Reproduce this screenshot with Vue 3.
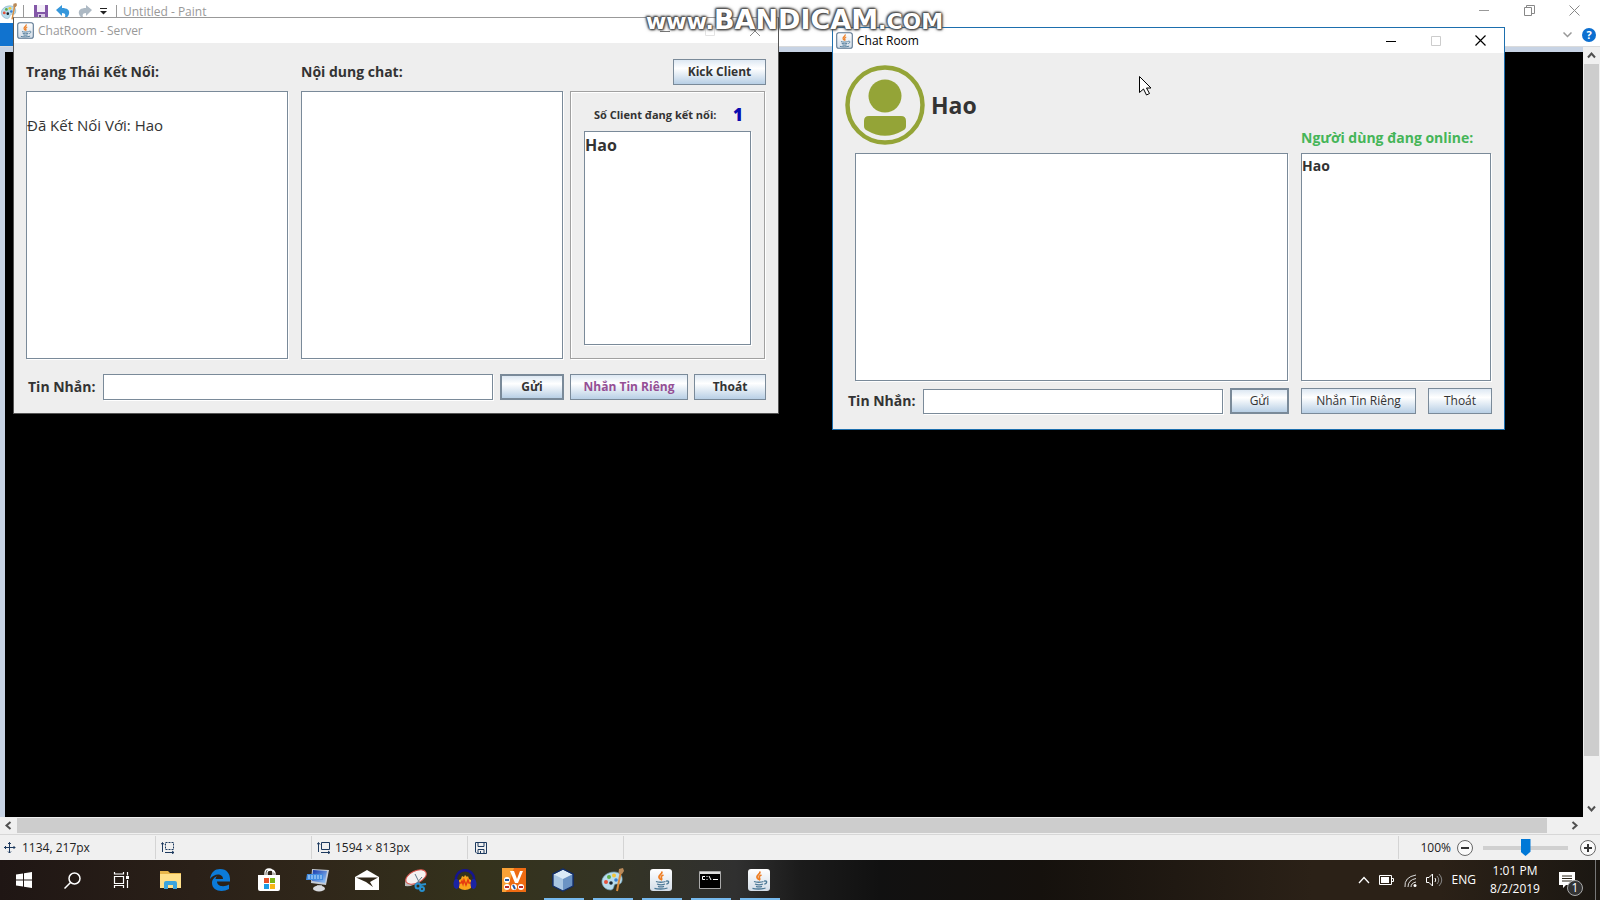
<script setup>
import { ref } from 'vue'

const statusLog = ref('\nĐã Kết Nối Với: Hao')
const chatLog = ref('')
const clientLog = ref('')
const serverMessage = ref('')
const clientMessage = ref('')
const zoom = ref(50)
const users = ['Hao']
const pinned = ['start', 'search', 'tasks', 'folder', 'edge', 'store', 'remote', 'mail', 'snip', 'audio', 'unikey', 'cube', 'palette', 'java', 'cmd', 'java']
const labels = ['Start', 'Search', 'Task View', 'File Explorer', 'Edge', 'Store', 'Remote', 'Mail', 'Snipping Tool', 'Audacity', 'UniKey', 'VirtualBox', 'Paint', 'ChatRoom - Server', 'Command Prompt', 'Chat Room']
</script>

<template>
  <svg class="defs" aria-hidden="true">
    <defs>
      <linearGradient id="tile" x1="0" y1="0" x2="0" y2="1">
        <stop offset="0" stop-color="#fff" /><stop offset="1" stop-color="#d3dde8" />
      </linearGradient>
      <linearGradient id="screen" x1="0" y1="0" x2="1" y2="1">
        <stop offset="0" stop-color="#1236a8" /><stop offset="1" stop-color="#9ed0ff" />
      </linearGradient>
      <symbol id="java" viewBox="0 0 24 24">
        <rect x="1" y="1" width="22" height="22" rx="3" fill="url(#tile)" />
        <path d="M12.500 3.500c2 2-3.500 3.500-2.500 6 .3 1 1.500 1.500 1.800 2.500M14.500 7c-2 .8-2.800 1.700-2 3 .5.900.3 1.700-.4 2.200" fill="none" stroke="#ee7d22" stroke-width="1.700" />
        <path d="M7 13.500c2 1 7.500 1 9.500 0M8 16c2 .8 6 .8 8 0M9 18.300c1.500.6 4.500.6 6 0M5.500 20.300c3 1 9.500 1 13-.3M17 13.200c4-1 3 2.500.3 3" fill="none" stroke="#4c7896" stroke-width="1.300" />
      </symbol>
      <symbol id="palette" viewBox="0 0 24 24">
        <path d="M2 15C1 9 7 4 14 4c6 0 9 4 8 9-1 4-4 3-6 3-3 0-1 5-5 6-5 0-8-3-9-7z" fill="#b9dcec" stroke="#6f9fb8" stroke-width=".7" />
        <circle cx="6" cy="14" r="2" fill="#e3523d" /><circle cx="9" cy="9" r="2" fill="#5cb04b" /><circle cx="14" cy="7.500" r="2" fill="#f2c53a" /><circle cx="11" cy="15" r="1.800" fill="#17232d" /><circle cx="16" cy="12" r="1.800" fill="#397fd2" />
        <path d="M21 3l-4 20" stroke="#d98b3d" stroke-width="2" /><path d="M18.500 5l.5-4 4-1 1 3-2 3z" fill="#b98a5a" />
      </symbol>
    </defs>
  </svg>

  <div class="desktop">
    <main class="paint">
      <header class="titlebar">
        <svg class="app" width="17" height="17"><use href="#palette" /></svg>
        <i class="sep"></i>
        <button class="ghost" aria-label="Save"><svg width="14" height="14"><path d="M0 0h14v14H0z" fill="#8458a8" /><path d="M3 0h8v7H3z" fill="#f3eef8" /><path d="M4 9h7v5H4z" fill="#d9cbe6" /><path d="M5 10h2v4H5z" fill="#63428a" /></svg></button>
        <button class="ghost" aria-label="Undo"><svg width="14" height="14"><path d="M0 5l6-5v3c5 0 8 2 7 6-1 3-3 4-5 5 2-3 2-6-2-6v3z" fill="#3697db" /></svg></button>
        <button class="ghost" aria-label="Redo"><svg width="14" height="14"><path d="M14 5L8 0v3C3 3 0 5 1 9c1 3 3 4 5 5-2-3-2-6 2-6v3z" fill="#adb9c4" /></svg></button>
        <button class="ghost drop" aria-label="Customize toolbar"><svg width="7" height="7"><path d="M0 .500h7" stroke="#222" /><path d="M0 3h7L3.500 6.500z" fill="#222" /></svg></button>
        <i class="sep"></i>
        <h1>Untitled - Paint</h1>
        <div class="controls">
          <button class="ghost" aria-label="Minimize"><svg width="11" height="11"><path d="M0 5.500h10" stroke="#999" /></svg></button>
          <button class="ghost" aria-label="Restore"><svg width="11" height="11" fill="none" stroke="#888"><path d="M.500 2.500h7v8h-7zM2.500 2.500v-2h8v8h-3" /></svg></button>
          <button class="ghost" aria-label="Close"><svg width="11" height="11"><path d="M.500.500l10 10M10.500.500l-10 10" stroke="#888" /></svg></button>
        </div>
      </header>
      <div class="ribbon">
        <button class="file" aria-label="File"></button>
        <button class="ghost" aria-label="Expand ribbon"><svg width="9" height="6"><path d="M.500.500l4 4 4-4" fill="none" stroke="#999" stroke-width="1.500" /></svg></button>
        <button class="ghost help" aria-label="Help">?</button>
      </div>
      <section class="work">
        <div class="canvas"></div>
        <div class="vscroll">
          <svg width="17" height="17"><path d="M5 10.500l3.500-4 3.500 4" fill="none" stroke="#505050" stroke-width="2" /></svg>
          <div class="vtrack"><i></i></div>
          <svg width="17" height="17"><path d="M5 6.500l3.500 4 3.500-4" fill="none" stroke="#505050" stroke-width="2" /></svg>
        </div>
      </section>
      <div class="hscroll">
        <svg width="17" height="17"><path d="M10.500 5l-4 3.500 4 3.500" fill="none" stroke="#505050" stroke-width="2" /></svg>
        <div class="htrack"><i></i></div>
        <svg width="17" height="17"><path d="M6.500 5l4 3.500-4 3.500" fill="none" stroke="#505050" stroke-width="2" /></svg>
      </div>
      <footer class="status">
        <div class="cell"><svg width="12" height="12" fill="none" stroke="#1d3a5f"><path d="M5.500 0v11M0 5.500h11M4 2L5.500.500 7 2M4 9.500L5.500 11 7 9.500M2 4L.500 5.500 2 7M9.500 4L11 5.500 9.500 7" /></svg><span>1134, 217px</span></div>
        <div class="cell pic"><svg width="14" height="12" fill="none" stroke="#1d3a5f"><path d="M1.500 10V1M0 2.500L1.500.500 3 2.500M4 10.500h9M11 9l2 1.500-2 1.500" /><path d="M4.500.500h8v7h-8z" stroke-dasharray="2 1" /></svg></div>
        <div class="cell pic"><svg width="14" height="12" fill="none" stroke="#1d3a5f"><path d="M1.500 10V1M0 2.500L1.500.500 3 2.500M4 10.500h9M11 9l2 1.500-2 1.500M4.500.500h8v7h-8z" /></svg><span>1594 × 813px</span></div>
        <div class="cell disk"><svg width="12" height="12" fill="none" stroke="#1d3a5f"><path d="M.500.500h11v11H2L.500 10zM3 .500v4h6v-4M3 11.500v-4h6v4M5.500 9v2" /></svg></div>
        <div class="cell last">
          <label for="zoom">100%</label>
          <button class="round" aria-label="Zoom out"><svg width="16" height="16"><circle cx="8" cy="8" r="7.500" fill="#fafafa" stroke="#666" /><path d="M4 8h8" stroke="#333" stroke-width="2" /></svg></button>
          <input id="zoom" v-model="zoom" type="range" min="0" max="100" />
          <button class="round" aria-label="Zoom in"><svg width="16" height="16"><circle cx="8" cy="8" r="7.500" fill="#fafafa" stroke="#666" /><path d="M4 8h8M8 4v8" stroke="#333" stroke-width="2" /></svg></button>
        </div>
      </footer>
    </main>

    <section class="window server">
      <header class="bar">
        <svg width="17" height="17"><use href="#java" /></svg>
        <h2>ChatRoom - Server</h2>
        <div class="controls">
          <button class="ghost" aria-label="Minimize server"><svg width="10" height="10"><path d="M0 5.500h10" stroke="#777" /></svg></button>
          <button class="ghost" disabled aria-label="Maximize server"><svg width="10" height="10"><path d="M.500.500h9v9h-9z" fill="none" stroke="#e4e4e4" /></svg></button>
          <button class="ghost" aria-label="Close server"><svg width="10" height="10"><path d="M0 0l10 10M10 0L0 10" stroke="#888" /></svg></button>
        </div>
      </header>
      <div class="body">
        <div class="heads">
          <label for="log">Trạng Thái Kết Nối:</label>
          <label for="chat">Nội dung chat:</label>
          <button class="metal">Kick Client</button>
        </div>
        <div class="panes">
          <textarea id="log" v-model="statusLog" readonly></textarea>
          <textarea id="chat" v-model="chatLog" readonly></textarea>
          <div class="clients">
            <p><span>Số Client đang kết nối:</span><strong>1</strong></p>
            <ul class="list"><li v-for="u in users" :key="u">{{ u }}</li></ul>
          </div>
        </div>
        <form class="send" @submit.prevent>
          <label for="smsg">Tin Nhắn:</label>
          <input id="smsg" v-model="serverMessage" type="text" />
          <button class="metal default">Gửi</button>
          <button class="metal private" type="button">Nhắn Tin Riêng</button>
          <button class="metal quit" type="button">Thoát</button>
        </form>
      </div>
    </section>

    <section class="window client">
      <header class="bar">
        <svg width="17" height="17"><use href="#java" /></svg>
        <h2>Chat Room</h2>
        <div class="controls">
          <button class="ghost" aria-label="Minimize chat"><svg width="10" height="10"><path d="M0 5.500h10" stroke="#000" /></svg></button>
          <button class="ghost" disabled aria-label="Maximize chat"><svg width="10" height="10"><path d="M.500.500h9v9h-9z" fill="none" stroke="#ccc" /></svg></button>
          <button class="ghost" aria-label="Close chat"><svg width="11" height="11"><path d="M.500.500l10 10M10.500.500l-10 10" stroke="#000" stroke-width="1.200" /></svg></button>
        </div>
      </header>
      <div class="body">
        <div class="profile">
          <svg width="80" height="80" viewBox="0 0 80 80" fill="#94a437"><circle cx="40" cy="40" r="37.500" fill="none" stroke="#94a437" stroke-width="4.500" /><circle cx="40" cy="31" r="16.500" /><path d="M24 51h32q5 0 5 5v5q0 3-3 4.500Q40 76 22 65.500 19 64 19 61v-5q0-5 5-5z" /></svg>
          <strong>Hao</strong>
          <span id="online">Người dùng đang online:</span>
        </div>
        <div class="panes">
          <textarea v-model="clientLog" readonly aria-label="Chat"></textarea>
          <ul class="list" aria-labelledby="online"><li v-for="u in users" :key="u">{{ u }}</li></ul>
        </div>
        <form class="send" @submit.prevent>
          <label for="cmsg">Tin Nhắn:</label>
          <input id="cmsg" v-model="clientMessage" type="text" />
          <button class="metal default">Gửi</button>
          <button class="metal private" type="button">Nhắn Tin Riêng</button>
          <button class="metal quit" type="button">Thoát</button>
        </form>
      </div>
    </section>

    <div class="watermark"><span>www.</span><b>BANDICAM</b><span>.COM</span></div>
    <svg class="cursor" width="13" height="20"><path d="M.500.500v16l4-3.500 3 6 3-1.500-3-5.500h4.500z" fill="#fff" stroke="#000" /></svg>

    <nav class="taskbar">
      <button v-for="(p, i) in pinned" :key="i" class="task" :class="{ open: i > 10 }" :aria-label="labels[i]">
        <svg v-if="p === 'start'" width="16" height="16" fill="#fff"><path d="M0 2.500l7-1v6H0zM8 1.300L16 0v7.500H8zM0 8.500h7v6l-7-1zM8 8.500h8V16l-8-1.300z" /></svg>
        <svg v-else-if="p === 'search'" width="17" height="17" fill="none" stroke="#fff" stroke-width="1.500"><circle cx="10.500" cy="6.500" r="5.500" /><path d="M6.500 10.500L.500 16.500" /></svg>
        <svg v-else-if="p === 'tasks'" width="17" height="16" fill="none" stroke="#fff" stroke-width="1.200"><path d="M1.500 4.500h9v7h-9zM1.500 0v2h9V0M1.500 16v-2.500h9V16M14.500 0v3.500M14.500 8v8" /><path d="M13 4h3v3h-3z" fill="#fff" stroke="none" /></svg>
        <svg v-else-if="p === 'folder'" width="24" height="20"><path d="M1 1h8l2 2h11v15H1z" fill="#e8b64b" /><path d="M1 4h21v14H1z" fill="#ffe08a" /><path d="M5 19v-6q0-2 2-2h9q2 0 2 2v6h-4v-4H9v4z" fill="#3ba4dd" /></svg>
        <svg v-else-if="p === 'edge'" width="22" height="22"><path d="M1 10C2 3 6 0 11 0c7 0 10 5 10 10v2.500H8c0 5 7 6 12 3V20c-7 4-17 2-17-6 0-4 3-6 5-7-1 1-1.500 2-1.500 3H14C14 4 5 4 1 10z" fill="#0c7bd8" /></svg>
        <svg v-else-if="p === 'store'" width="24" height="24"><path d="M8 8V5q0-4 4-4t4 4v3M10 7V5q0-3 4-3 3 0 4 3v2" fill="none" stroke="#fff" stroke-width="1.300" /><path d="M1 7h22v14q0 2-2 2H3q-2 0-2-2z" fill="#fff" /><path d="M7 10h5v5H7z" fill="#e8502a" /><path d="M13 10h5v5h-5z" fill="#7bb518" /><path d="M7 16h5v5H7z" fill="#1d9ce5" /><path d="M13 16h5v5h-5z" fill="#f8b719" /></svg>
        <svg v-else-if="p === 'remote'" width="24" height="24"><path d="M6 1l17 1-3 15-15-2z" fill="#c6ccd6" /><path d="M7 2l14 1-2 12-13-2z" fill="url(#screen)" /><path d="M1 6h16v6H0z" fill="#438ce0" /><path d="M2 8h14M2 10h14" stroke="#c4e3ff" stroke-dasharray="2 1" /><path d="M11 17h5v3h-5z" fill="#999" /><ellipse cx="13" cy="20.500" rx="6" ry="3" fill="#d8dade" /></svg>
        <svg v-else-if="p === 'mail'" width="24" height="20"><path d="M0 7l12-7 12 7v13H0z" fill="#fff" /><path d="M1 7.500h22l-8 4.500 3 5-7-5z" fill="#302719" /></svg>
        <svg v-else-if="p === 'snip'" width="24" height="23"><path d="M1 14Q2 7 9 3q8-4 12 0 0 6-6 10-7 5-14 4z" fill="#bbb" /><ellipse cx="12" cy="8" rx="11" ry="6" transform="rotate(-25 12 8)" fill="#f5f2f2" stroke="#d95149" /><path d="M11 5l6 12M18 8l-6 7" stroke="#60788a" /><g fill="none" stroke="#278fce" stroke-width="2"><circle cx="14" cy="17" r="2.500" /><circle cx="18" cy="20" r="2" /><path d="M16 16l6-1" /></g></svg>
        <svg v-else-if="p === 'audio'" width="24" height="22"><path d="M3 14C0-3 24-3 21 14" fill="none" stroke="#15158e" stroke-width="2.500" /><path d="M6 19v-8l2-1 1-3 2 1 1-2 2 2 1-1 1 3 2 1v8q-6 4-12 0z" fill="#f9a51b" /><path d="M6 14h2l1-2 1 3 1-4 2 5 2-5 1 3h2" stroke="#e63b10" stroke-width="1.500" fill="none" /><ellipse cx="3.500" cy="15" rx="3" ry="5" fill="#1b24a4" /><ellipse cx="20.500" cy="15" rx="3" ry="5" fill="#1b24a4" /></svg>
        <svg v-else-if="p === 'unikey'" width="24" height="24"><path d="M0 0h24v24H0z" fill="#ee6b12" /><path d="M0 0h12L4 24H0z" fill="#f9a136" /><path d="M8 3h4l3 8 3-8h3l-5 12h-3z" fill="#fff" /><g fill="#fff"><circle cx="5" cy="12" r="3" /><circle cx="5" cy="19" r="3" /><circle cx="12" cy="19" r="3" /><circle cx="19" cy="19" r="3" /></g><path d="M3 12h4M11 17l2 4" stroke="#24569f" stroke-width="2" /><path d="M3 19h4M17 19h4" stroke="#b82a2a" stroke-width="2" /></svg>
        <svg v-else-if="p === 'cube'" width="24" height="24" stroke="#142e66" stroke-width="1.300" stroke-linejoin="round"><path d="M12 1l10 5v12l-10 5L2 18V6z" fill="#dbeaf6" /><path d="M2 6l10 5v12L2 18z" fill="#a9c6e2" stroke="none" /><path d="M22 6l-10 5v12l10-5z" fill="#6b93c4" stroke="none" /><path d="M12 1l10 5v12l-10 5L2 18V6z" fill="none" /></svg>
        <svg v-else-if="p === 'cmd'" width="22" height="18"><path d="M.500.500h21v17H.500z" fill="#000" stroke="#aaa" /><path d="M1 1h20v2H1z" fill="#ddd" /><path d="M6 5.500H3.500v3H6M8 5v1M8 8v1M10 5l2 4M14 8.500h5" fill="none" stroke="#fff" /></svg>
        <svg v-else width="24" height="24"><use :href="'#' + p" /></svg>
      </button>
      <div class="tray">
        <svg width="12" height="8" fill="none" stroke="#fff" stroke-width="1.300"><path d="M1 7l5-5.500L11 7" /></svg>
        <svg width="16" height="10" fill="none" stroke="#fff"><path d="M.500.500h12v9H.500zM13 3.500h1.500v3H13" /><path d="M2 2h8v6H2z" fill="#fff" stroke="none" /></svg>
        <svg width="13" height="13" fill="none" stroke="#ddd"><path d="M1 13Q0 3 12 1M4 13q0-7 8-8.500M7 13q0-4 5-5" /><circle cx="11" cy="11.500" r="1.500" fill="#fff" stroke="none" /></svg>
        <svg width="17" height="14" fill="none" stroke="#fff"><path d="M.500 4.500H3L6.500 1v12L3 9.500H.500z" /><path d="M9 5q1.500 2 0 4" /><path d="M11 3q3.500 4 0 8M13 1q5.500 6 0 12" stroke="#888" /></svg>
        <span class="lang">ENG</span>
        <time>1:01 PM<br />8/2/2019</time>
        <button class="ghost note" aria-label="Notifications"><svg width="16" height="17"><path d="M0 0h16v13H7l-3 3v-3H0z" fill="#fff" /><path d="M3 4h10M3 6.500h10M3 9h10" stroke="#2a2418" /></svg><b>1</b></button>
      </div>
    </nav>
  </div>
</template>

<style>
body { background: #000; }
</style>

<style scoped>
* { box-sizing: border-box; }
.defs { position: absolute; width: 0; height: 0; }
.desktop { position: relative; display: flex; flex-direction: column; height: 100vh; overflow: hidden; font: 12px/16px "Open Sans", "Noto Sans", sans-serif; color: #333; }
button, input, textarea { font: inherit; color: inherit; margin: 0; padding: 0; }
h1, h2, p, ul { margin: 0; padding: 0; font: inherit; list-style: none; }
svg { display: block; flex: none; }
.ghost, .round, .task { display: flex; align-items: center; justify-content: center; border: 0; background: none; }
.controls { display: flex; align-self: stretch; margin-left: auto; }
.controls .ghost { width: 45px; }

.paint { flex: 1; display: flex; flex-direction: column; min-height: 0; background: #fff; }
.titlebar { display: flex; align-items: center; gap: 8px; height: 23px; color: #999; }
.titlebar .app { margin-right: -2px; }
.titlebar .sep { width: 1px; height: 14px; background: #999; }
.titlebar > .ghost { width: 14px; }
.titlebar .drop { margin: 0 -2px 0 -4px; }
.titlebar .sep:first-of-type { margin-right: 2px; }
.titlebar h1 { margin-left: -2px; }
.titlebar .controls { height: 20px; align-self: flex-start; margin-right: 3px; }
.ribbon { display: flex; align-items: center; height: 24px; border-bottom: 1px solid #dadbdc; }
.file { width: 56px; height: 23px; margin-right: auto; border: 0; background: #1173cf; }
.help { width: 14px; height: 14px; margin: 0 4px 0 10px; border-radius: 50%; background: #0c6fd0; color: #fff; font-size: 11px; font-weight: 700; }
.work { flex: 1; display: flex; min-height: 0; background: #c7d3e4; }
.canvas { flex: 1; margin: 5px 0 0 5px; background: #000; }
.vscroll { display: flex; flex-direction: column; width: 17px; background: #f0f0f0; }
.vtrack { flex: 1; padding: 0 1px; }
.vtrack i { display: block; height: 94%; background: #cdcdcd; }
.hscroll { display: flex; height: 17px; padding-right: 17px; background: #f0f0f0; }
.htrack { flex: 1; padding: 1px 4px 1px 0; }
.htrack i { display: block; height: 15px; margin-right: 1%; background: #cdcdcd; }
.status { display: flex; height: 26px; padding: 1px 0; border-top: 1px solid #d7d7d7; background: #f0f0f0; color: #222; }
.cell { display: flex; align-items: center; gap: 6px; width: 156px; padding-left: 4px; border-right: 1px solid #d4d4d4; }
.cell.pic { padding-left: 5px; gap: 4px; }
.cell.disk { padding-left: 7px; }
.cell.last { width: auto; margin-left: auto; padding: 0 4px 0 21px; gap: 6px; border-left: 1px solid #d4d4d4; border-right: 0; }
#zoom { appearance: none; width: 85px; height: 18px; margin: 0 6px 0 4px; background: linear-gradient(#d0d0d0, #d0d0d0) center / 100% 4px no-repeat; }
#zoom::-webkit-slider-thumb { appearance: none; width: 10px; height: 17px; background: #0078d7; clip-path: polygon(0 0, 100% 0, 100% 75%, 50% 100%, 0 75%); }

.window { position: absolute; display: flex; flex-direction: column; background: #eee; border: 1px solid; }
.server { left: 13px; top: 17px; width: 766px; height: 397px; border-color: #999 #555 #555; }
.client { left: 832px; top: 27px; width: 673px; height: 403px; border-color: #1d6fae; }
.bar { display: flex; align-items: center; gap: 4px; height: 25px; padding-left: 3px; background: #fff; }
.bar > svg { stroke: #58748f; stroke-width: 1.5px; }
.server .bar { color: #999; }
.client .bar { color: #000; }
.bar .controls { padding-right: 1px; }
.body { flex: 1; display: flex; flex-direction: column; }
.server .body { padding: 16px 12px 13px; }
.client .body { padding: 12px 12px 15px; }
.heads { display: flex; align-items: center; height: 26px; margin-bottom: 6px; font-size: 14px; font-weight: 700; }
.heads label { width: 275px; }
.heads .metal { width: 93px; margin-left: auto; }
.panes { flex: 1; display: flex; gap: 13px; }
.server .panes { padding-right: 1px; }
textarea, .list, input[type="text"] { border: 1px solid #7a8a99; border-radius: 0; background: #fff; box-shadow: 1px 1px 0 #fff; outline: 0; resize: none; }
textarea { flex: 1; min-width: 0; font-size: 15px; line-height: 22px; overflow: hidden; }
.list { font-weight: 700; }
.clients { display: flex; flex-direction: column; width: 195px; margin-left: -6px; padding: 13px; border: 1px solid #a0a0a0; box-shadow: inset 1px 1px 0 #fff, 1px 1px 0 #fff; }
.clients p { display: flex; align-items: center; justify-content: space-between; height: 20px; margin-bottom: 6px; padding: 0 8px 0 10px; font-size: 11px; font-weight: 700; }
.clients p strong { font-size: 17px; color: #0a0ab0; }
.clients .list { flex: 1; font-size: 16px; line-height: 26px; }
.send { display: flex; align-items: center; }
.send label { font-size: 14px; font-weight: 700; }
.send input { flex: 1; min-width: 0; height: 26px; }
.metal { height: 26px; border: 1px solid #7a8a99; border-radius: 0; background: linear-gradient(#dde8f3, #fff 35%, #b8cfe5); font-size: 12px; font-weight: 700; white-space: nowrap; }
.metal.default { border-width: 2px; }
.server .send { margin-top: 15px; }
.server .send label { width: 77px; padding-left: 2px; }
.server .default { width: 64px; margin: 0 6px 0 7px; }
.server .private { width: 118px; margin-right: 6px; color: #954f95; }
.server .quit { width: 72px; }
.profile { display: flex; align-items: center; height: 80px; margin-bottom: 8px; }
.profile strong { margin-left: 6px; font-size: 23px; line-height: 32px; }
.profile span { width: 191px; margin-left: auto; align-self: flex-end; font-size: 14px; line-height: 14px; font-weight: 700; color: #45b558; }
.client .panes { padding: 0 1px 0 10px; }
.client .list { width: 190px; padding-top: 1px; font-size: 14px; line-height: 22px; }
.client .send { margin-top: 7px; }
.client .send label { width: 78px; padding-left: 3px; }
.client .send input { height: 25px; }
.client .metal { font-weight: 400; }
.client .default { width: 59px; margin: 0 12px 0 7px; }
.client .private { width: 115px; margin-right: 12px; }
.client .quit { width: 64px; }

.watermark { position: absolute; left: 646px; top: 4px; display: flex; align-items: baseline; font-family: "DejaVu Sans", sans-serif; font-size: 22px; line-height: 32px; font-weight: 700; color: #fff; text-shadow: 0 0 2px #444, 0 0 2px #444, 0 0 3px #555, 1px 1px 2px #555, -1px -1px 2px #555, 0 0 4px #777; }
.watermark b { font-size: 27px; }
.watermark span:last-child { font-size: 22px; }
.cursor { position: absolute; left: 1139px; top: 76px; }

.taskbar { display: flex; height: 40px; background: linear-gradient(90deg, #1f1614, #2a2018 12%, #30271a 20%, #34321c 30%, #343424 38%, #303030 46%, #1b1b1b 50%, #111 55%, #15110d 65%, #2b2117 82%, #2b2117 90%, #1b1712); color: #fff; }
.task { width: 49px; height: 40px; padding: 0 2px 0 0; }
.open { background: linear-gradient(#76b9ed, #76b9ed) center bottom / 40px 2px no-repeat; }
.tray { display: flex; align-items: center; gap: 9px; margin-left: auto; margin-right: 4px; padding-right: 11px; border-right: 1px solid #777; }
.tray time { width: 60px; line-height: 18px; text-align: center; }
.note { position: relative; width: 34px; height: 36px; margin-left: -4px; }
.note b { position: absolute; left: 17px; top: 18px; width: 16px; height: 16px; border: 1px solid #aaa; border-radius: 50%; background: #333; color: #fff; line-height: 14px; font-weight: 400; }
</style>
